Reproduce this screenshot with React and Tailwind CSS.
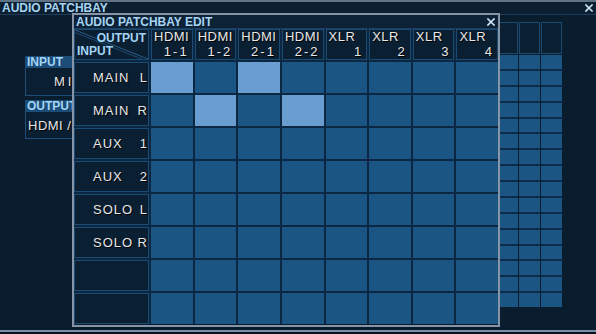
import React from 'react';

const outputs = [
  ['HDMI', '1-1'],
  ['HDMI', '1-2'],
  ['HDMI', '2-1'],
  ['HDMI', '2-2'],
  ['XLR', '1'],
  ['XLR', '2'],
  ['XLR', '3'],
  ['XLR', '4'],
];

const inputs = [
  ['MAIN', 'L'],
  ['MAIN', 'R'],
  ['AUX', '1'],
  ['AUX', '2'],
  ['SOLO', 'L'],
  ['SOLO', 'R'],
  null,
  null,
];

// which [input][output] cells are patched
const patched = {
  '0-0': true,
  '0-2': true,
  '1-1': true,
  '1-3': true,
};

const Close = ({ className }) => (
  <svg viewBox="0 0 8 8" className={className}>
    <path d="M1 1 L7 7 M7 1 L1 7" stroke="currentColor" strokeWidth="1.6" strokeLinecap="square" />
  </svg>
);

const App = () => {
  const bgCols = Array.from({ length: 18 });
  const bgRows = Array.from({ length: 16 });

  return (
    <div className="relative w-[596px] h-[334px] overflow-hidden bg-[#0a1d2f] font-['Liberation_Sans',sans-serif]">
      {/* Background window: AUDIO PATCHBAY */}
      <div className="flex flex-col h-full">
        <div className="h-[2px] bg-[#607386]" />
        <div className="h-[13px] flex items-center justify-between pl-[2px] pr-[3px] bg-[#0c1f31] border-b border-[#1d3e5e]">
          <span className="text-[12px] leading-none font-bold text-[#a6d4f2]">AUDIO PATCHBAY</span>
          <Close className="w-[8px] h-[8px] text-[#cfe6f5]" />
        </div>

        <div className="flex-1 flex">
          {/* left INPUT / OUTPUT panel */}
          <div className="ml-[25px] mt-[41px] w-[100px] flex flex-col">
            <div className="h-[11px] bg-[#1b4c77] flex items-center pl-[2px]">
              <span className="text-[12px] leading-none font-bold text-[#a3d5f5]">INPUT</span>
            </div>
            <div className="h-[29px] border border-[#1d4d78] bg-[#0b1f32] flex items-center pl-[28px]">
              <span className="text-[13px] leading-none tracking-[3px] text-[#e6e6e6] [text-shadow:1px_1px_0_#000]">MI</span>
            </div>
            <div className="mt-[4px] h-[11px] bg-[#1b4c77] flex items-center pl-[2px]">
              <span className="text-[12px] leading-none font-bold text-[#a3d5f5]">OUTPUT</span>
            </div>
            <div className="h-[28px] border border-[#1d4d78] bg-[#0b1f32] flex items-center pl-[2px]">
              <span className="text-[13px] leading-none tracking-[0.5px] text-[#e6e6e6] [text-shadow:1px_1px_0_#000]">HDMI /</span>
            </div>
          </div>

          {/* right patch grid (mostly hidden by the edit dialog) */}
          <div className="ml-auto mr-[34px] mt-[7px] flex gap-[1px]">
            {bgCols.map((_, c) => (
              <div key={c} className="w-[21px] flex flex-col gap-[1px]">
                <div className="h-[32px] border border-[#1d4a70] bg-[#0b1f32]" />
                <div className="h-[252px] grid grid-rows-[repeat(16,minmax(0,1fr))] gap-[2px] bg-[#0d2c49]">
                  {bgRows.map((_, r) => (
                    <div key={r} className="bg-[#1b5583]" />
                  ))}
                </div>
              </div>
            ))}
          </div>
        </div>

        <div className="h-[2px] bg-[#7b8fa4]" />
        <div className="h-[2px] bg-[#06121e]" />
      </div>

      {/* Edit dialog */}
      <div className="absolute left-[72px] top-[13px] w-[428px] h-[314px] border-2 border-[#8694a5] bg-[#0a1d2f] flex flex-col">
        <div className="h-[14px] flex items-center justify-between pl-[2px] pr-[3px] bg-[#0d2237] border-b border-[#1d4060]">
          <span className="text-[12px] leading-none font-bold text-[#a6d4f2]">AUDIO PATCHBAY EDIT</span>
          <Close className="w-[8px] h-[8px] text-[#cfe6f5]" />
        </div>

        <div className="grid grid-cols-[75px_repeat(8,minmax(0,1fr))] grid-rows-[31px_repeat(8,31px)] gap-[2px] bg-[#0c2741]">
          {/* corner cell */}
          <div className="relative border border-[#1b4a72] bg-[#0b1f32]">
            <svg className="absolute inset-0 w-full h-full" viewBox="0 0 73 29" preserveAspectRatio="none">
              <line x1="0" y1="0" x2="73" y2="29" stroke="#2a5b88" strokeWidth="1" />
              <line x1="0" y1="2.5" x2="73" y2="31.5" stroke="#1f4a72" strokeWidth="1" />
            </svg>
            <span className="absolute right-[2px] top-[2px] text-[12px] leading-none font-bold text-[#a3d5f5]">OUTPUT</span>
            <span className="absolute left-[2px] bottom-[2px] text-[12px] leading-none font-bold text-[#a3d5f5]">INPUT</span>
          </div>

          {outputs.map(([name, num], i) => (
            <div
              key={`h${i}`}
              className="border border-[#1b4a72] bg-[#0b1f32] flex flex-col justify-between pl-[2px] pr-[3px] pb-[1px] text-[13px] leading-none text-[#e8e8e8] [text-shadow:1px_1px_0_#000]"
            >
              <span className="tracking-[0.5px]">{name}</span>
              <span className="self-end tracking-[2px]">{num}</span>
            </div>
          ))}

          {inputs.map((inp, r) => (
            <React.Fragment key={`r${r}`}>
              <div className="border border-[#1b4a72] bg-[#0b1f32] flex items-center justify-end pr-[1px]">
                {inp && (
                  <div className="w-[54px] flex justify-between text-[13px] leading-none text-[#e8e8e8] [text-shadow:1px_1px_0_#000]">
                    <span className="tracking-[1px]">{inp[0]}</span>
                    <span>{inp[1]}</span>
                  </div>
                )}
              </div>
              {outputs.map((_, c) => (
                <div
                  key={`c${r}-${c}`}
                  className={patched[`${r}-${c}`] ? 'bg-[#6a9ed0]' : 'bg-[#1b5583]'}
                />
              ))}
            </React.Fragment>
          ))}
        </div>
      </div>
    </div>
  );
};

export default App;
